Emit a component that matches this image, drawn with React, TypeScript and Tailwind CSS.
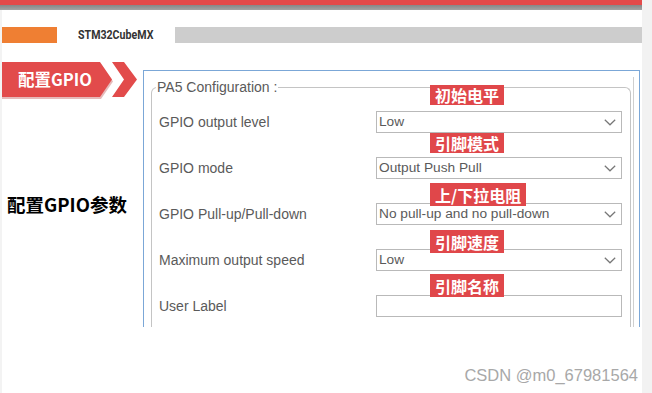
import React from "react";

const Chevron = () => (
  <svg width="12" height="7" viewBox="0 0 12 7" className="shrink-0">
    <polyline points="0.8,0.8 6,5.8 11.2,0.8" fill="none" stroke="#777777" strokeWidth="1.2" />
  </svg>
);

type Row = {
  label: string;
  value?: string;
  tag: string;
  tagClass: string;
  input?: boolean;
};

const rows: Row[] = [
  { label: "GPIO output level", value: "Low", tag: "初始电平", tagClass: "top-[-27px] h-[20px]" },
  { label: "GPIO mode", value: "Output Push Pull", tag: "引脚模式", tagClass: "top-[-25px] h-[20px]" },
  { label: "GPIO Pull-up/Pull-down", value: "No pull-up and no pull-down", tag: "上/下拉电阻", tagClass: "top-[-21px] h-[23px]" },
  { label: "Maximum output speed", value: "Low", tag: "引脚速度", tagClass: "top-[-20px] h-[23px]" },
  { label: "User Label", tag: "引脚名称", tagClass: "top-[-22px] h-[23px]", input: true },
];

const cjk = { fontFamily: '"Noto Sans CJK SC", "Noto Sans", sans-serif' };
const arial = { fontFamily: '"Liberation Sans", Arial, sans-serif' };

export default function App() {
  return (
    <div className="w-[652px] h-[393px] bg-white flex overflow-hidden">
      <div className="w-[642px] flex flex-col">
        <div className="h-[5px] bg-[#e44a4a]" />
        <div className="h-[5px] bg-gradient-to-b from-[#878787] to-[#a5a5a5]" />
        <div className="flex flex-1">
          <div className="w-[2px] bg-[#f3f3f3]" />
          <div className="flex-1 flex flex-col">
            {/* header */}
            <div className="mt-[17px] flex items-center h-[16px]">
              <div className="w-[55px] h-[16px] bg-[#ef7f33]" />
              <div className="ml-[21px] w-[97px] h-[16px] flex items-center">
                <span
                  className="block origin-left scale-x-[0.85] text-[12.5px] font-bold text-[#333333] leading-[16px] whitespace-nowrap"
                  style={{ fontFamily: 'Roboto, "Liberation Sans", sans-serif' }}
                >
                  STM32CubeMX
                </span>
              </div>
              <div className="flex-1 h-[16px] bg-[#cdcdcd]" />
            </div>

            {/* body */}
            <div className="mt-[19px] flex">
              <div className="w-[141px] flex flex-col">
                <div className="relative h-[35px] w-[136px]">
                  <svg width="136" height="37" viewBox="0 0 136 37" className="absolute left-0 top-0">
                    <polygon points="0,2 99,2 111,19.5 99,37 0,37" fill="#b83a3a" opacity="0.35" />
                    <polygon points="0,0 98,0 110,17.5 98,35 0,35" fill="#e24b4b" />
                    <polygon points="110,0 122,0 135,17.5 122,35 110,35 122,17.5" fill="#e24b4b" />
                  </svg>
                  <span
                    className="absolute left-[16px] top-[6px] text-[16.5px] font-bold text-white leading-[22px]"
                    style={cjk}
                  >
                    配置GPIO
                  </span>
                </div>
                <div className="mt-[95px] pl-[5px] text-[18.5px] font-bold text-black leading-[24px]" style={cjk}>
                  配置GPIO参数
                </div>
              </div>

              <div className="mt-[8px] w-[497px] h-[257px] border-t border-l border-r border-[#7ba7d7] overflow-hidden flex">
                <div className="flex-1 pl-[7px] pt-[16px] mr-[5px] pr-[2px] border-r border-[#cfcfcf] mt-[6px] flex">
                  <div className="relative flex-1 h-[300px] border-t border-l border-r border-[#c4c4c4] rounded-t-[6px] -mt-[6px] pl-[7px] pr-[7px]">
                    <span
                      className="absolute left-[4px] top-[-9px] bg-white px-[1px] text-[14px] leading-[16px] text-[#5a5a5a]"
                      style={arial}
                    >
                      PA5 Configuration :
                    </span>
                    <div className="flex flex-col gap-[24px] pt-[23px]">
                      {rows.map((r) => (
                        <div key={r.label} className="flex items-center h-[22px]">
                          <div className="w-[217px] text-[14px] text-[#5a5a5a] leading-[16px]" style={arial}>
                            {r.label}
                          </div>
                          <div className="relative w-[246px] h-[22px] border border-[#b9b9b9] bg-white flex items-center justify-between pl-[2px] pr-[5px]">
                            <span className="text-[13.7px] text-[#5a5a5a] leading-[16px]" style={arial}>
                              {r.value ?? ""}
                            </span>
                            {!r.input && <Chevron />}
                            <span
                              className={
                                "absolute left-[53px] px-[5px] bg-[#e0474a] text-white text-[16px] font-bold flex items-center leading-none " +
                                r.tagClass
                              }
                              style={cjk}
                            >
                              {r.tag}
                            </span>
                          </div>
                        </div>
                      ))}
                    </div>
                  </div>
                </div>
              </div>
            </div>

            {/* watermark */}
            <div className="mt-[38px] flex justify-end pr-[4px]">
              <span className="text-[16.5px] text-[#a8a8a8] leading-[20px]" style={arial}>
                CSDN @m0_67981564
              </span>
            </div>
          </div>
        </div>
      </div>
      <div className="w-[10px] bg-[#f2f2f2]" />
    </div>
  );
}
